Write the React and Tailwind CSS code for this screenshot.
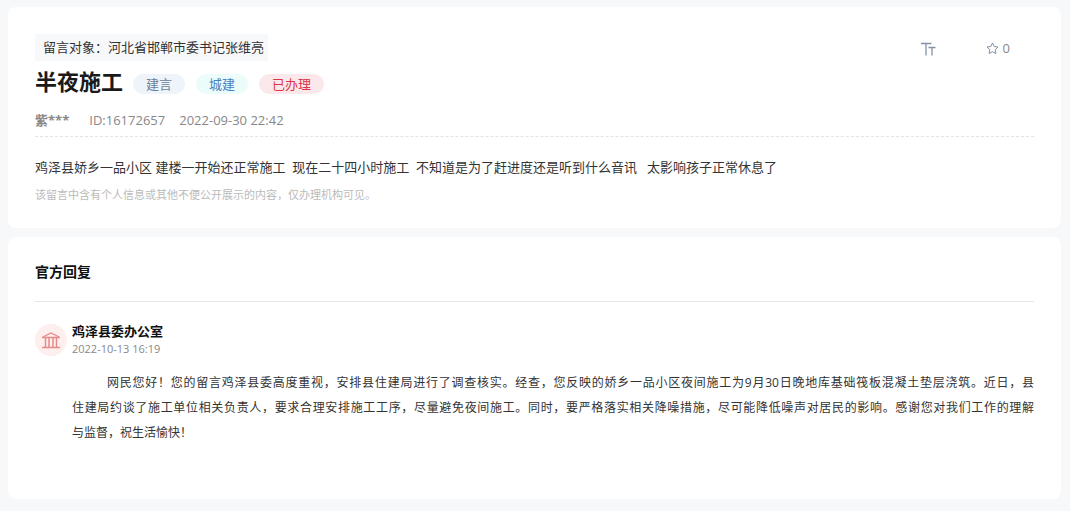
import React, { useState } from "react";

const TAGS = [
  { text: "建言", className: "bg-[#eff3fa] text-[#6b7f99]" },
  { text: "城建", className: "bg-[#ebfcfa] text-[#4a7fc1]" },
  { text: "已办理", className: "bg-[#fbe8ea] text-[#dc3545]" },
];

const REPLY_LINES = [
  "网民您好！您的留言鸡泽县委高度重视，安排县住建局进行了调查核实。经查，您反映的娇乡一品小区夜间施工为9月30日晚地库基础筏板混凝土垫层浇筑。近日，县",
  "住建局约谈了施工单位相关负责人，要求合理安排施工工序，尽量避免夜间施工。同时，要严格落实相关降噪措施，尽可能降低噪声对居民的影响。感谢您对我们工作的理解",
  "与监督，祝生活愉快！",
];

const FontSizeIcon = () => (
  <svg width="16" height="14" viewBox="0 0 16 14" fill="none" stroke="currentColor" strokeWidth="1.3">
    <path d="M1 1.5h10.5M6 1.5V13.5" />
    <path d="M8.5 5.5H15.5M12 5.5V13.5" />
  </svg>
);

const StarIcon = () => (
  <svg width="13" height="13" viewBox="0 0 13 13" fill="none" stroke="currentColor" strokeLinejoin="round">
    <path d="M6.5 1l1.7 3.5 3.8.5-2.8 2.7.7 3.8-3.4-1.8-3.4 1.8.7-3.8L1 5l3.8-.5z" />
  </svg>
);

const OfficeIcon = () => (
  <svg width="18" height="17" viewBox="0 0 18 17" fill="none" stroke="currentColor">
    <path d="M1 5L9 1l8 4" strokeWidth="1.3" />
    <path d="M0 5.5h18M0 15.5h18" strokeWidth="1.3" />
    <path d="M3.5 6v9M7 6v9M11 6v9M14.5 6v9" strokeWidth="1.5" />
  </svg>
);

const Message = () => {
  const [starred, setStarred] = useState(false);

  return (
    <section className="bg-white rounded-lg pt-[27px] px-[27px] pb-[23px]">
      <div className="flex items-start justify-between">
        <div className="bg-[#f7f8fa] pl-2 pr-1 text-[13px] leading-[27px] text-[#333]">
          留言对象：河北省邯郸市委书记张维亮
        </div>
        <div className="flex items-center gap-[50px] h-[29px] pr-6 text-[13px] text-[#8590a6]">
          <button type="button" aria-label="字号" className="cursor-pointer">
            <FontSizeIcon />
          </button>
          <button
            type="button"
            aria-label="收藏"
            aria-pressed={starred}
            onClick={() => setStarred(!starred)}
            className="flex items-center gap-1 cursor-pointer"
          >
            <StarIcon />
            <span className="text-[#888]">{starred ? 1 : 0}</span>
          </button>
        </div>
      </div>

      <div className="flex items-start mt-[2px]">
        <h1 className="mr-[10px] text-[22px] leading-[32px] font-bold text-[#1a1a1a]">半夜施工</h1>
        <div className="flex gap-[11px] pt-[9px]">
          {TAGS.map((t) => (
            <span key={t.text} className={`rounded-full px-[13px] text-[13px] leading-[20px] ${t.className}`}>
              {t.text}
            </span>
          ))}
        </div>
      </div>

      <div className="flex mt-[10px] pb-[3px] border-b border-dashed border-[#e3e3e3] text-[13px] leading-[26px] text-[#888]">
        <span className="font-bold mr-5">紫***</span>
        <span className="mr-[14px]">ID:16172657</span>
        <time>2022-09-30 22:42</time>
      </div>

      <p className="mt-[17px] text-[13px] leading-[26px] text-[#333] whitespace-pre-wrap">
        {"鸡泽县娇乡一品小区 建楼一开始还正常施工  现在二十四小时施工  不知道是为了赶进度还是听到什么音讯   太影响孩子正常休息了"}
      </p>
      <p className="mt-[5px] text-[11px] leading-[20px] text-[#bbb]">
        该留言中含有个人信息或其他不便公开展示的内容，仅办理机构可见。
      </p>
    </section>
  );
};

const Reply = () => (
  <section className="bg-white rounded-lg px-[27px] pb-[54px]">
    <h2 className="pt-[22px] pb-[16px] border-b border-[#e5e5e5] text-[14px] leading-[26px] font-bold text-[#111]">
      官方回复
    </h2>
    <div className="flex gap-[5px] pt-[20px]">
      <span className="flex items-center justify-center shrink-0 mt-[2px] size-8 rounded-full bg-[#ffeeee] text-[#e58a88]">
        <OfficeIcon />
      </span>
      <div className="flex-1">
        <h3 className="text-[13px] leading-[18px] font-bold text-[#111]">鸡泽县委办公室</h3>
        <time className="block text-[11px] leading-[18px] text-[#888]">2022-10-13 16:19</time>
        <div className="mt-[12px] text-[12px] leading-[25px] text-[#333] text-justify">
          {REPLY_LINES.map((line, i) => (
            <p
              key={i}
              className="first:pl-[35px] [text-align-last:justify] last:[text-align-last:left]"
            >
              {line}
            </p>
          ))}
        </div>
      </div>
    </div>
  </section>
);

export default function App() {
  return (
    <main className="min-h-screen flex flex-col gap-[9px] bg-[#f7f8fa] pt-[7px] pl-2 pr-[9px] pb-3 font-['Open_Sans','Noto_Sans_CJK_SC',sans-serif]" lang="zh-CN">
      <Message />
      <Reply />
    </main>
  );
}
